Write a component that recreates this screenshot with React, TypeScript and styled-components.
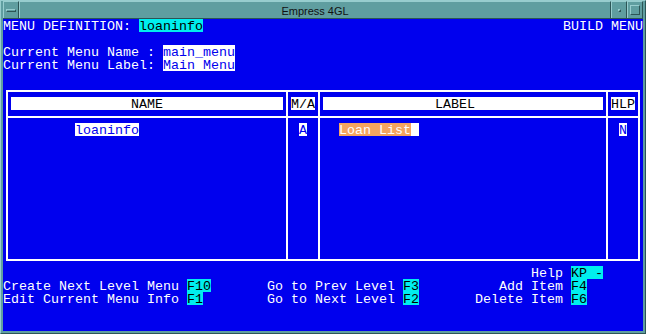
import React from 'react';
import styled, { createGlobalStyle } from 'styled-components';

// ---------- palette ---------- //
const TEAL = '#5f9ea0';
const TEAL_LIGHT = '#97cdce';
const TEAL_DARK = '#2c5556';
const BLUE = '#0000ee';
const CYAN = '#00eeee';
const SAND = '#f4a460';

type Tone = 'plain' | 'key' | 'field' | 'head' | 'orange' | 'cursor';

const toneBg: Record<Tone, string> = {
  plain: 'transparent',
  key: CYAN,
  field: '#ffffff',
  head: '#ffffff',
  orange: SAND,
  cursor: '#ffffff',
};

const toneFg: Record<Tone, string> = {
  plain: '#ffffff',
  key: '#000000',
  field: BLUE,
  head: '#000000',
  orange: '#ffffff',
  cursor: BLUE,
};

const GlobalStyle = createGlobalStyle`
  html, body {
    margin: 0;
    padding: 0;
    background: ${TEAL};
  }
  body {
    width: 646px;
    height: 334px;
    overflow: hidden;
  }
`;

// ---------- main component ---------- //
const App = () => {
  return (
    <>
      <GlobalStyle />
      <Window>
        <TitleBar>
          <MenuButton>
            <MenuBar />
          </MenuButton>
          <Title>Empress 4GL</Title>
          <CornerButton>
            <MinDot />
          </CornerButton>
          <CornerButton>
            <MaxBox />
          </CornerButton>
        </TitleBar>

        <Screen>
          <Line $spread>
            <Row>
              <Seg>MENU DEFINITION: </Seg>
              <Seg $tone="key">loaninfo</Seg>
            </Row>
            <Seg>BUILD MENU</Seg>
          </Line>
          <Line />
          <Line>
            <Seg>Current Menu Name : </Seg>
            <Seg $tone="field">main_menu</Seg>
          </Line>
          <Line>
            <Seg>Current Menu Label: </Seg>
            <Seg $tone="field">Main Menu</Seg>
          </Line>
          <Line />

          <TableArea>
            <TableGrid>
              <HeadCell>
                <Seg $tone="head" $indent={15} $fill>NAME</Seg>
              </HeadCell>
              <HeadCell>
                <Seg $tone="head" $fill>M/A</Seg>
              </HeadCell>
              <HeadCell>
                <Seg $tone="head" $indent={14} $fill>LABEL</Seg>
              </HeadCell>
              <HeadCell>
                <Seg $tone="head" $fill>HLP</Seg>
              </HeadCell>

              <DataCell>
                <Line>
                  <Seg>        </Seg>
                  <Seg $tone="field">loaninfo</Seg>
                </Line>
              </DataCell>
              <DataCell>
                <Line>
                  <Seg> </Seg>
                  <Seg $tone="field">A</Seg>
                </Line>
              </DataCell>
              <DataCell>
                <Line>
                  <Seg>  </Seg>
                  <Seg $tone="orange">Loan List</Seg>
                  <Seg $tone="cursor"> </Seg>
                </Line>
              </DataCell>
              <DataCell>
                <Line>
                  <Seg> </Seg>
                  <Seg $tone="field">N</Seg>
                </Line>
              </DataCell>
            </TableGrid>
          </TableArea>

          <Footer>
            <Line />
            <Line />
            <Line $end><Seg>Help </Seg></Line>
            <Line><Seg $tone="key">KP -</Seg></Line>

            <Line>
              <Seg>Create Next Level Menu </Seg>
              <Seg $tone="key">F10</Seg>
            </Line>
            <Line>
              <Seg>Go to Prev Level </Seg>
              <Seg $tone="key">F3</Seg>
            </Line>
            <Line $end><Seg>Add Item </Seg></Line>
            <Line><Seg $tone="key">F4</Seg></Line>

            <Line>
              <Seg>Edit Current Menu Info </Seg>
              <Seg $tone="key">F1</Seg>
            </Line>
            <Line>
              <Seg>Go to Next Level </Seg>
              <Seg $tone="key">F2</Seg>
            </Line>
            <Line $end><Seg>Delete Item </Seg></Line>
            <Line><Seg $tone="key">F6</Seg></Line>
          </Footer>
        </Screen>
      </Window>
    </>
  );
};

// ---------- window frame ---------- //
const Window = styled.div`
  width: 646px;
  height: 334px;
  box-sizing: border-box;
  display: flex;
  flex-direction: column;
  padding: 0 3px 3px 3px;
  background: ${TEAL};
  border-left: 1px solid ${TEAL_LIGHT};
  border-top: 1px solid ${TEAL_LIGHT};
  border-right: 1px solid ${TEAL_DARK};
  border-bottom: 1px solid ${TEAL_DARK};
  padding-left: 2px;
  padding-right: 2px;
  padding-bottom: 2px;
`;

const TitleBar = styled.div`
  display: flex;
  height: 18px;
  box-sizing: border-box;
  border-bottom: 1px solid ${TEAL_DARK};
  margin-bottom: 0;
`;

const Bevel = styled.div`
  box-sizing: border-box;
  height: 17px;
  border-top: 1px solid ${TEAL_LIGHT};
  border-left: 1px solid ${TEAL_LIGHT};
  border-right: 1px solid ${TEAL_DARK};
  display: flex;
  align-items: center;
  justify-content: center;
`;

const MenuButton = styled(Bevel)`
  width: 16px;
`;

const MenuBar = styled.div`
  width: 10px;
  height: 3px;
  box-sizing: border-box;
  border-top: 1px solid ${TEAL_LIGHT};
  border-left: 1px solid ${TEAL_LIGHT};
  border-right: 1px solid ${TEAL_DARK};
  border-bottom: 1px solid ${TEAL_DARK};
`;

const Title = styled(Bevel)`
  flex: 1;
  font-family: 'Liberation Sans', Arial, sans-serif;
  font-size: 11px;
  color: #111;
  padding-top: 1px;
`;

const CornerButton = styled(Bevel)`
  width: 16px;
`;

const MinDot = styled.div`
  width: 3px;
  height: 3px;
  box-sizing: border-box;
  border-top: 1px solid ${TEAL_LIGHT};
  border-left: 1px solid ${TEAL_LIGHT};
  border-right: 1px solid ${TEAL_DARK};
  border-bottom: 1px solid ${TEAL_DARK};
`;

const MaxBox = styled.div`
  width: 10px;
  height: 10px;
  box-sizing: border-box;
  border-top: 1px solid ${TEAL_LIGHT};
  border-left: 1px solid ${TEAL_LIGHT};
  border-right: 1px solid ${TEAL_DARK};
  border-bottom: 1px solid ${TEAL_DARK};
`;

// ---------- terminal screen ---------- //
const Screen = styled.div`
  width: 640px;
  height: 312px;
  margin-top: 0;
  background: ${BLUE};
  display: flex;
  flex-direction: column;
  font-family: 'Liberation Mono', 'DejaVu Sans Mono', monospace;
  font-size: 13.333px;
  color: #fff;
`;

const Line = styled.div<{ $spread?: boolean; $end?: boolean }>`
  display: flex;
  height: 13px;
  justify-content: ${(p) => (p.$spread ? 'space-between' : p.$end ? 'flex-end' : 'flex-start')};
`;

const Row = styled.div`
  display: flex;
`;

const Seg = styled.span<{ $tone?: Tone; $indent?: number; $fill?: boolean }>`
  display: block;
  height: 13px;
  box-sizing: border-box;
  padding-top: 1px;
  padding-left: ${(p) => (p.$indent ?? 0) * 8}px;
  line-height: 13px;
  white-space: pre;
  background: ${(p) => toneBg[p.$tone ?? 'plain']};
  color: ${(p) => toneFg[p.$tone ?? 'plain']};
  ${(p) => (p.$fill ? 'width: 100%;' : '')}
`;

const TableArea = styled.div`
  height: 182px;
  box-sizing: border-box;
  padding: 6px 3px 5px 3px;
`;

const TableGrid = styled.div`
  display: grid;
  grid-template-columns: 278px 30px 286px 30px;
  grid-template-rows: 24px 141px;
  gap: 2px;
  padding: 2px;
  background: #fff;
`;

const HeadCell = styled.div`
  background: ${BLUE};
  padding: 5px 3px 0 3px;
`;

const DataCell = styled.div`
  background: ${BLUE};
  padding: 5px 3px 0 3px;
`;

const Footer = styled.div`
  display: grid;
  grid-template-columns: 264px 1fr auto 72px;
  grid-auto-rows: 13px;
`;

export default App;
